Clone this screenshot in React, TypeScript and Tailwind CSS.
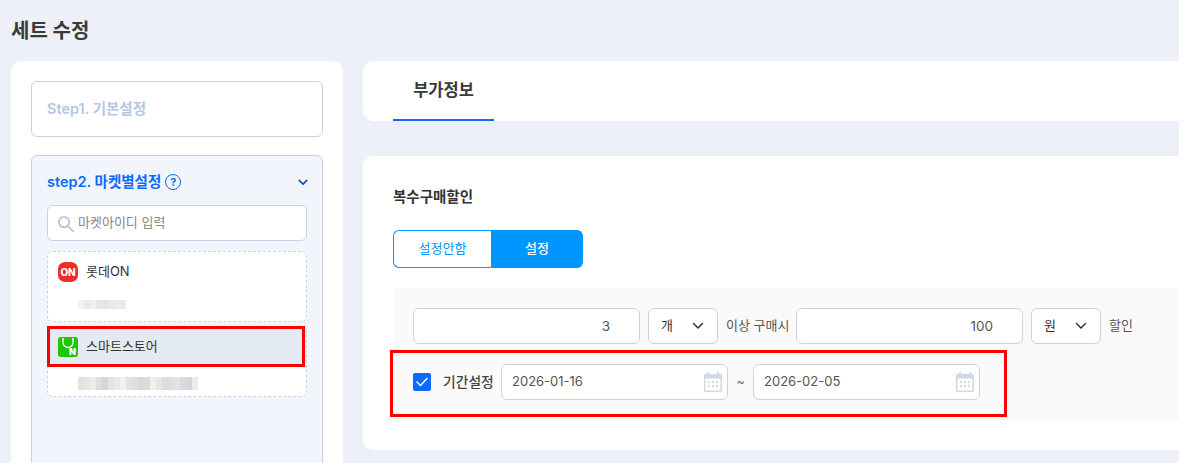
const FONT = "font-['Inter','Noto_Sans_CJK_KR',sans-serif]";

const mosaicA = ['#f2f2f2', '#e8e8e8', '#efefef', '#e8e6e4', '#e4e4e4', '#e8e8e8', '#ececec', '#eaeaea'];
const mosaicB = [
  '#e2e2e2', '#e6e6e6', '#ececec', '#dedede', '#d6d6d6', '#e0e3ea', '#e8e8e8', '#f0f0f0', '#e2e2e2', '#dedede',
  '#d9d9d9', '#dcdcdc', '#f0f0f0', '#e6e6e6', '#dcdcdc', '#e2dce0', '#e2e2e2', '#d8dce0', '#d9d6d6', '#e8ecec',
];

function Mosaic({ cells, className }: { cells: string[]; className: string }) {
  return (
    <div className={`flex ${className}`}>
      {cells.map((c, i) => (
        <div key={i} className="w-[6px] h-full" style={{ backgroundColor: c }} />
      ))}
    </div>
  );
}

function Chevron({ className, weight = 1.5 }: { className: string; weight?: number }) {
  return (
    <svg viewBox="0 0 12 8" fill="none" stroke="currentColor" strokeWidth={weight} strokeLinecap="round" strokeLinejoin="round" className={className}>
      <path d="M1.5 1.5 6 6l4.5-4.5" />
    </svg>
  );
}

function CalendarIcon() {
  return (
    <svg viewBox="0 0 18 20" className="w-[18px] h-[20px] text-[#d0d8e4]" fill="currentColor">
      <path d="M3 0h2v2h8V0h2v2h1.5A1.5 1.5 0 0 1 18 3.5v15a1.5 1.5 0 0 1-1.5 1.5h-15A1.5 1.5 0 0 1 0 18.500v-15A1.5 1.5 0 0 1 1.500 2H3V0Zm-1.500 6.500v12h15v-12h-15Z" />
      <path d="M0 2.500h18V6H0z" />
      <path d="M4 9h2v2H4zM8 9h2v2H8zM12 9h2v2h-2zM4 13h2v2H4zM8 13h2v2H8zM12 13h2v2h-2z" />
    </svg>
  );
}

function NumberInput({ value }: { value: string }) {
  return (
    <div className="w-[227px] h-[36px] bg-white border border-[#c8d2e4] rounded-[6px] flex items-center justify-end pr-[29px] text-[13.5px] text-[#555]">
      {value}
    </div>
  );
}

function UnitSelect({ label }: { label: string }) {
  return (
    <div className="w-[70px] h-[36px] bg-white border border-[#c8d2e4] rounded-[6px] flex items-center justify-between pl-[12px] pr-[13px] text-[13px] text-[#333]">
      {label}
      <Chevron className="w-[12px] h-[8px] text-[#333]" />
    </div>
  );
}

function DateInput({ value }: { value: string }) {
  return (
    <div className="w-[227px] h-[36px] bg-white border border-[#c8d2e4] rounded-[6px] flex items-center justify-between pl-[10px] pr-[5px] text-[13px] text-[#555]">
      {value}
      <CalendarIcon />
    </div>
  );
}

export default function App() {
  return (
    <div className={`${FONT} relative w-[1179px] h-[463px] overflow-hidden bg-[#edf0f8] pl-[11px]`}>
      <h1 className="h-[61px] pt-[17px] text-[20px] leading-[28px] font-bold text-[#3a3a3a]">세트 수정</h1>

      <div className="flex gap-[20px]">
        {/* left steps */}
        <div className="w-[332px] h-[500px] shrink-0 bg-white rounded-[10px] p-[20px]">
          <div className="h-[56px] border border-[#c8d2e4] rounded-[6px] flex items-center pl-[15px] text-[14.5px] font-semibold text-[#b4c6e2]">
            Step1. 기본설정
          </div>

          <div className="mt-[18px] h-[400px] bg-[#f2f5fb] border border-[#c8d2e4] rounded-[6px] px-[15px]">
            <div className="h-[49px] pt-[3px] flex items-center justify-between">
              <div className="flex items-center gap-[4px] text-[14.5px] font-semibold text-[#0b6bff]">
                step2. 마켓별설정
                <span className="w-[16px] h-[16px] rounded-full border-[1.5px] border-[#0b6bff] text-[11px] leading-none flex items-center justify-center font-bold">?</span>
              </div>
              <Chevron className="w-[10px] h-[7px] text-[#0a4fc4] mr-[-1px]" weight={2} />
            </div>

            <div className="h-[36px] bg-white border border-[#c8d2e4] rounded-[6px] flex items-center pl-[9px] gap-[4px] text-[13px] text-[#888]">
              <svg viewBox="0 0 18 18" fill="none" stroke="#b4c6e2" strokeWidth="2" strokeLinecap="round" className="w-[17px] h-[17px]">
                <circle cx="7.500" cy="7.500" r="5.500" />
                <path d="m12 12 5 5" />
              </svg>
              마켓아이디 입력
            </div>

            <div className="mt-[10px] h-[71px] bg-white border border-dashed border-[#c8d2e4] rounded-[6px] pl-[10px] pt-[10px]">
              <div className="flex items-center gap-[8px] text-[13px] text-[#333]">
                <div className="w-[20px] h-[20px] rounded-[7px] bg-[#f02b28] flex items-center justify-center text-[10px] font-extrabold tracking-tight text-white">ON</div>
                롯데ON
              </div>
              <Mosaic cells={mosaicA} className="ml-[20px] mt-[18px] h-[9px]" />
            </div>

            <div className="mt-[4px] h-[71px] bg-white border border-dashed border-[#c8d2e4] rounded-[6px]">
              <div className="h-[40px] bg-[#e4eaf4] pl-[10px] flex items-center gap-[8px] text-[13px] text-[#333]">
                <div className="relative w-[20px] h-[20px] rounded-[3px] bg-[#1ec800] overflow-hidden">
                  <svg viewBox="0 0 20 20" fill="none" stroke="white" strokeWidth="1.300" className="w-[20px] h-[20px]">
                    <path d="M5 1v4.500a5 5 0 0 0 10 0V1" />
                  </svg>
                  <span className="absolute right-[2px] bottom-[1px] text-[9px] leading-[9px] font-black text-white">N</span>
                </div>
                스마트스토어
              </div>
              <Mosaic cells={mosaicB} className="ml-[30px] mt-[10px] h-[13px]" />
            </div>
          </div>
        </div>

        {/* right content */}
        <div className="w-[850px] shrink-0">
          <div className="h-[60px] bg-white rounded-[10px] pl-[30px] flex">
            <div className="w-[101px] h-full border-b-2 border-[#0b6bff] flex items-center justify-center pt-[1px] text-[16.5px] font-semibold text-[#3a3a3a]">
              부가정보
            </div>
          </div>

          <div className="mt-[35px] h-[294px] bg-white rounded-[10px] pt-[31px] pl-[30px]">
            <div className="text-[14.5px] leading-[20px] font-semibold text-[#333]">복수구매할인</div>

            <div className="mt-[23px] w-[190px] h-[38px] flex text-[13px]">
              <div className="w-[98px] bg-white border border-[#0096ff] border-r-0 rounded-l-[6px] flex items-center justify-center text-[#0096ff]">설정안함</div>
              <div className="w-[92px] bg-[#0096ff] rounded-r-[6px] flex items-center justify-center font-medium text-white">설정</div>
            </div>

            <div className="mt-[20px] h-[132px] bg-[#fafafa] pt-[20px] pl-[20px]">
              <div className="flex items-center gap-[8px] text-[13px] text-[#555]">
                <NumberInput value="3" />
                <UnitSelect label="개" />
                <span className="w-[62px] whitespace-nowrap">이상 구매시</span>
                <NumberInput value="100" />
                <UnitSelect label="원" />
                <span>할인</span>
              </div>

              <div className="mt-[20px] flex items-center text-[13px]">
                <div className="w-[18px] h-[18px] rounded-[2px] bg-[#0b6bff] flex items-center justify-center">
                  <svg viewBox="0 0 12 10" fill="none" stroke="white" strokeWidth="1.500" strokeLinecap="round" strokeLinejoin="round" className="w-[12px] h-[10px]">
                    <path d="m1 5 3.500 3.500L11 1.500" />
                  </svg>
                </div>
                <span className="ml-[12px] w-[58px] text-[13.8px] font-medium text-[#444]">기간설정</span>
                <DateInput value="2026-01-16" />
                <span className="w-[25px] text-center text-[#777]">~</span>
                <DateInput value="2026-02-05" />
              </div>
            </div>
          </div>
        </div>
      </div>

      {/* annotation boxes */}
      <div className="absolute left-[47px] top-[326px] w-[258px] h-[41px] border-[3px] border-[#ff0000]" />
      <div className="absolute left-[390px] top-[350px] w-[617px] h-[67px] border-[3px] border-[#ff0000]" />
    </div>
  );
}
